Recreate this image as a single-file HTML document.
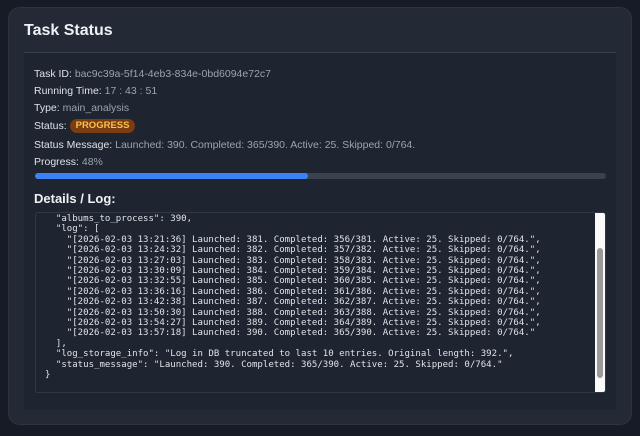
<!DOCTYPE html>
<html><head><style>
body{margin:0;width:640px;height:436px;background:#161b25;font-family:"Liberation Sans",sans-serif;overflow:hidden;position:relative}
.card{position:absolute;left:8px;top:7px;width:624px;height:418px;background:#232a36;border-radius:12px;border:1px solid #2c3441;box-sizing:border-box}
h1{position:absolute;left:15px;top:14px;margin:0;font-size:16px;font-weight:bold;color:#eef1f5}
.sep{position:absolute;left:15px;top:44px;width:592px;height:1px;background:#353e4c}
.panel{position:absolute;left:15px;top:45px;width:592px;height:357px;background:#1f2530;border-radius:0 0 4px 4px}
.info{position:absolute;left:25px;font-size:10.5px;color:#dde2e8}
.info span{color:#9aa3ae}
.info span.badge{display:inline-block;background:#7c3c12;color:#f6c350;font-weight:bold;font-size:9.5px;border-radius:8px;padding:1px 6px;line-height:12px;vertical-align:middle}
.bar{position:absolute;left:26px;top:165px;width:571px;height:6px;background:#3a4250;border-radius:3px}
.bar div{width:273px;height:6px;background:#3b82f6;border-radius:3px}
h2{position:absolute;left:25px;top:183px;margin:0;font-size:13px;font-weight:bold;color:#eef1f5}
.log{position:absolute;left:26px;top:204px;width:569px;height:179px;background:#1f2530;border:1px solid #303846;border-radius:3px;overflow:hidden}
pre{position:absolute;left:9px;top:1px;margin:0;font-family:"DejaVu Sans Mono",monospace;font-size:9.05px;line-height:10.4px;color:#dfe3e8}
.sb{position:absolute;right:0;top:0;width:10px;height:179px;background:#fafafa}
.th{position:absolute;left:2px;top:35px;width:6px;height:130px;background:#9a9a9a;border-radius:3px}
</style></head><body>
<div class="card">
<h1>Task Status</h1>
<div class="sep"></div>
<div class="panel"></div>
<div class="info" style="top:60px">Task ID: <span>bac9c39a-5f14-4eb3-834e-0bd6094e72c7</span></div>
<div class="info" style="top:77px">Running Time: <span>17 : 43 : 51</span></div>
<div class="info" style="top:94px">Type: <span>main_analysis</span></div>
<div class="info" style="top:111px">Status: <span class="badge">PROGRESS</span></div>
<div class="info" style="top:131px">Status Message: <span>Launched: 390. Completed: 365/390. Active: 25. Skipped: 0/764.</span></div>
<div class="info" style="top:148px">Progress: <span>48%</span></div>
<div class="bar"><div></div></div>
<h2>Details / Log:</h2>
<div class="log"><pre>  "albums_to_process": 390,
  "log": [
    "[2026-02-03 13:21:36] Launched: 381. Completed: 356/381. Active: 25. Skipped: 0/764.",
    "[2026-02-03 13:24:32] Launched: 382. Completed: 357/382. Active: 25. Skipped: 0/764.",
    "[2026-02-03 13:27:03] Launched: 383. Completed: 358/383. Active: 25. Skipped: 0/764.",
    "[2026-02-03 13:30:09] Launched: 384. Completed: 359/384. Active: 25. Skipped: 0/764.",
    "[2026-02-03 13:32:55] Launched: 385. Completed: 360/385. Active: 25. Skipped: 0/764.",
    "[2026-02-03 13:36:16] Launched: 386. Completed: 361/386. Active: 25. Skipped: 0/764.",
    "[2026-02-03 13:42:38] Launched: 387. Completed: 362/387. Active: 25. Skipped: 0/764.",
    "[2026-02-03 13:50:30] Launched: 388. Completed: 363/388. Active: 25. Skipped: 0/764.",
    "[2026-02-03 13:54:27] Launched: 389. Completed: 364/389. Active: 25. Skipped: 0/764.",
    "[2026-02-03 13:57:18] Launched: 390. Completed: 365/390. Active: 25. Skipped: 0/764."
  ],
  "log_storage_info": "Log in DB truncated to last 10 entries. Original length: 392.",
  "status_message": "Launched: 390. Completed: 365/390. Active: 25. Skipped: 0/764."
}</pre><div class="sb"><div class="th"></div></div></div>
</div>
</body></html>
